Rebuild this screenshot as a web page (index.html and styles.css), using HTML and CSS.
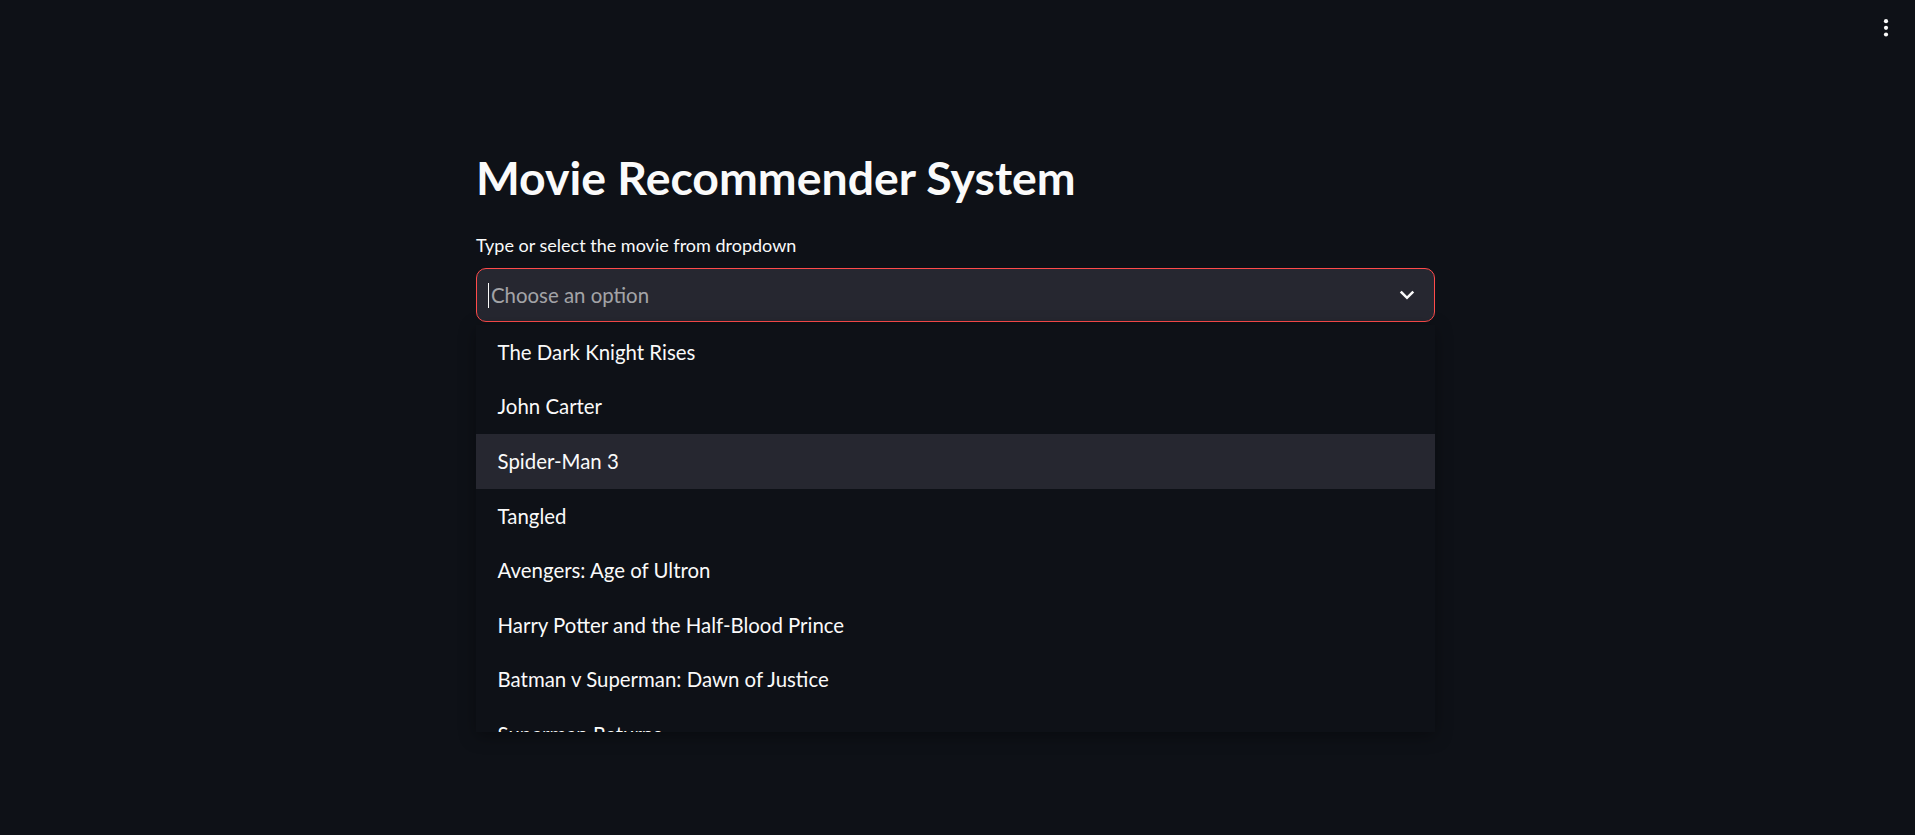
FILE: index.html
```html
<!DOCTYPE html>
<html lang="en">
<head>
<meta charset="utf-8">
<title>Movie Recommender System</title>
<link rel="stylesheet" href="styles.css">
</head>
<body>
<header class="app-header">
  <button class="menu-btn" aria-label="Main menu">
    <svg width="6" height="20" viewBox="0 0 6 20" aria-hidden="true">
      <circle cx="3" cy="3.2" r="2.1" fill="#fafafa"/>
      <circle cx="3" cy="9.8" r="2.1" fill="#fafafa"/>
      <circle cx="3" cy="16.5" r="2.1" fill="#fafafa"/>
    </svg>
  </button>
</header>
<main class="main">
  <div class="block">
    <h1 class="title">Movie Recommender System</h1>
    <label class="field-label">Type or select the movie from dropdown</label>
    <div class="select-wrap">
      <div class="select">
        <span class="caret"></span>
        <span class="placeholder">Choose an option</span>
        <svg class="chevron" width="24" height="24" viewBox="0 0 24 24" aria-hidden="true">
          <path d="M6.6 9.4 L12 14.8 L17.4 9.4" fill="none" stroke="#fafafa" stroke-width="2.5" stroke-linecap="square" stroke-linejoin="miter"/>
        </svg>
      </div>
      <ul class="menu">
        <li class="option">The Dark Knight Rises</li>
        <li class="option">John Carter</li>
        <li class="option active">Spider-Man 3</li>
        <li class="option">Tangled</li>
        <li class="option">Avengers: Age of Ultron</li>
        <li class="option">Harry Potter and the Half-Blood Prince</li>
        <li class="option">Batman v Superman: Dawn of Justice</li>
        <li class="option">Superman Returns</li>
      </ul>
    </div>
  </div>
</main>
</body>
</html>
```
FILE: styles.css
```css
html, body {
  margin: 0;
  padding: 0;
  background: #0e1117;
  color: #fafafa;
  font-family: "Lato", "Noto Sans", sans-serif;
}

body {
  min-height: 835px;
}

.app-header {
  position: fixed;
  top: 0;
  left: 0;
  right: 0;
  height: 56px;
  display: flex;
  justify-content: flex-end;
  align-items: flex-start;
  padding-right: 26px;
  box-sizing: border-box;
}

.menu-btn {
  background: none;
  border: 0;
  padding: 0;
  margin-top: 18px;
  display: flex;
}

.main {
  padding-top: 150px;
  padding-left: 476px;
}

.block {
  width: 959px;
  display: flex;
  flex-direction: column;
}

.title {
  margin: 0 0 29.4px;
  font-size: 46.4px;
  line-height: 1.2;
  font-weight: 700;
  letter-spacing: 0;
}

.field-label {
  font-size: 18px;
  line-height: 1.2;
  margin-bottom: 11.6px;
}

.select-wrap {
  position: relative;
}

.select {
  height: 53.5px;
  box-sizing: border-box;
  border: 1px solid #ff4b4b;
  border-radius: 10px;
  background: #262730;
  display: flex;
  align-items: center;
  padding: 0 15px 0 11px;
}

.caret {
  width: 1px;
  height: 25px;
  background: #fafafa;
  margin-right: 2px;
}

.placeholder {
  flex: 1;
  font-size: 20.4px;
  line-height: 1.2;
  color: rgba(250, 250, 250, 0.6);
}

.chevron {
  display: block;
}

.menu {
  position: absolute;
  top: calc(100% + 3px);
  left: 0;
  right: 0;
  height: 407px;
  margin: 0;
  padding: 0;
  list-style: none;
  overflow: hidden;
  background: #0e1117;
  box-shadow: 0 4px 16px rgba(0, 0, 0, 0.35);
}

.option {
  flex: none;
  height: 54.6px;
  display: flex;
  align-items: center;
  padding-left: 21.6px;
  font-size: 20.4px;
  line-height: 1.2;
  color: #fafafa;
}

.option.active {
  background: #262730;
}
```
